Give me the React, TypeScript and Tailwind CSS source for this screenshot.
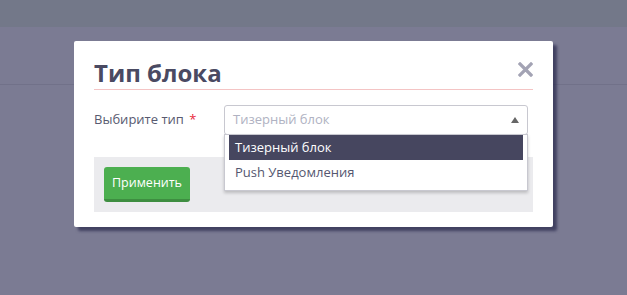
export default function App() {
  return (
    <div
      className="relative h-[295px] w-[627px] overflow-hidden bg-[#7b7b93]"
      style={{ fontFamily: '"Open Sans", "Noto Sans", sans-serif' }}
    >
      <div className="h-[27px] bg-[#737889]" />
      <div className="h-[58px] border-b border-[#717189]" />

      {/* modal */}
      <div className="absolute left-[74px] top-[41px] w-[479px] rounded-[2px] bg-white px-[20px] pb-[15px] pt-[16px] shadow-[4px_4px_3px_rgba(45,45,80,0.75)]">
        <div className="flex items-center justify-between border-b border-[#f4c4c4] pb-[1px]">
          <h2 className="text-[24px] font-bold leading-[31px] text-[#4a4a62]">Тип блока</h2>
          <svg width="15" height="15" viewBox="0 0 15 15" className="-mt-[6px]">
            <path d="M2 2 L13 13 M13 2 L2 13" stroke="#a3a3b4" strokeWidth="3.2" strokeLinecap="square" />
          </svg>
        </div>

        <div className="mt-[15px] flex items-center">
          <label className="w-[130px] text-[13px] text-[#585a70]">
            Выбирите тип <span className="ml-[2px] text-[#e8283a]">*</span>
          </label>
          <div className="relative w-[304px]">
            <div className="flex h-[30px] items-center justify-between rounded-[3px] border border-[#c8c8d0] bg-white pl-[8px] pr-[8px]">
              <span className="text-[13px] text-[#b0b2c2]">Тизерный блок</span>
              <svg width="8" height="6" viewBox="0 0 8 6">
                <path d="M4 0 L8 6 L0 6 Z" fill="#666" />
              </svg>
            </div>
            <div className="absolute left-0 top-[29px] z-10 w-[304px] border border-[#c8c8d0] bg-white px-[4px] pb-[4px] shadow-[0_2px_3px_rgba(0,0,0,0.2)]">
              <div className="flex h-[25px] items-center bg-[#46465f] px-[6px] text-[13px] text-white">
                Тизерный блок
              </div>
              <div className="flex h-[26px] items-center px-[6px] text-[13px] text-[#555770]">
                Push Уведомления
              </div>
            </div>
          </div>
        </div>

        <div className="mt-[22px] bg-[#ebebee] p-[10px]">
          <button
            type="button"
            className="h-[35px] w-[86px] rounded-[3px] border-b-[3px] border-[#3e8e41] bg-[#4caf50] text-[12.5px] text-white"
          >
            Применить
          </button>
        </div>
      </div>
    </div>
  );
}
